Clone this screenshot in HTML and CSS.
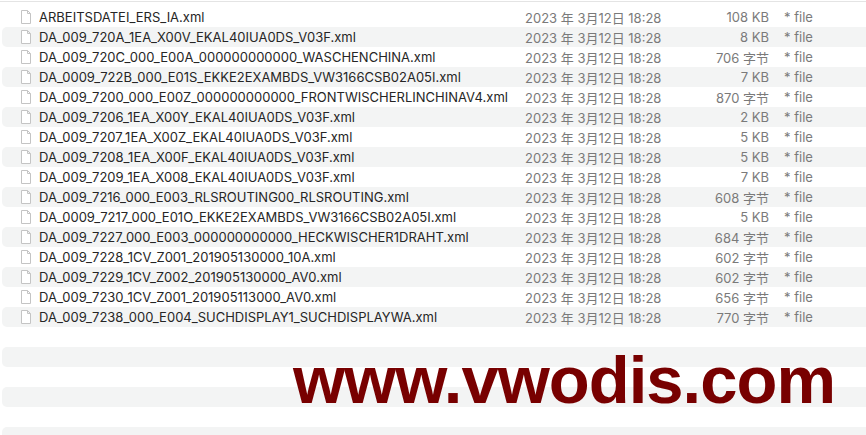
FILE: index.html
```html
<!DOCTYPE html>
<html lang="zh-CN">
<head>
  <meta charset="UTF-8" />
  <meta name="viewport" content="width=device-width, initial-scale=1.0"/>
  <title>Finder - XML</title>
  <link rel="stylesheet" href="styles.css">
</head>
<body>
  <div class="janela">
    <div class="lista">
      <div class="linha">
        <span class="icone"><svg width="10" height="14" viewBox="0 0 10 14"><path d="M0.5 0.5 H6.5 L9.5 3.5 V13.5 H0.5 Z M6.5 0.5 V3.5 H9.5" fill="#fff" stroke="#c4c4c4" stroke-width="1"/></svg></span>
        <span class="nome">ARBEITSDATEI_ERS_IA.xml</span>
        <span class="data">2023 年 3月12日 18:28</span>
        <span class="tam">108 KB</span>
        <span class="tipo">* file</span>
      </div>
      <div class="linha">
        <span class="icone"><svg width="10" height="14" viewBox="0 0 10 14"><path d="M0.5 0.5 H6.5 L9.5 3.5 V13.5 H0.5 Z M6.5 0.5 V3.5 H9.5" fill="#fff" stroke="#c4c4c4" stroke-width="1"/></svg></span>
        <span class="nome">DA_009_720A_1EA_X00V_EKAL40IUA0DS_V03F.xml</span>
        <span class="data">2023 年 3月12日 18:28</span>
        <span class="tam">8 KB</span>
        <span class="tipo">* file</span>
      </div>
      <div class="linha">
        <span class="icone"><svg width="10" height="14" viewBox="0 0 10 14"><path d="M0.5 0.5 H6.5 L9.5 3.5 V13.5 H0.5 Z M6.5 0.5 V3.5 H9.5" fill="#fff" stroke="#c4c4c4" stroke-width="1"/></svg></span>
        <span class="nome">DA_009_720C_000_E00A_000000000000_WASCHENCHINA.xml</span>
        <span class="data">2023 年 3月12日 18:28</span>
        <span class="tam">706 字节</span>
        <span class="tipo">* file</span>
      </div>
      <div class="linha">
        <span class="icone"><svg width="10" height="14" viewBox="0 0 10 14"><path d="M0.5 0.5 H6.5 L9.5 3.5 V13.5 H0.5 Z M6.5 0.5 V3.5 H9.5" fill="#fff" stroke="#c4c4c4" stroke-width="1"/></svg></span>
        <span class="nome">DA_0009_722B_000_E01S_EKKE2EXAMBDS_VW3166CSB02A05I.xml</span>
        <span class="data">2023 年 3月12日 18:28</span>
        <span class="tam">7 KB</span>
        <span class="tipo">* file</span>
      </div>
      <div class="linha">
        <span class="icone"><svg width="10" height="14" viewBox="0 0 10 14"><path d="M0.5 0.5 H6.5 L9.5 3.5 V13.5 H0.5 Z M6.5 0.5 V3.5 H9.5" fill="#fff" stroke="#c4c4c4" stroke-width="1"/></svg></span>
        <span class="nome">DA_009_7200_000_E00Z_000000000000_FRONTWISCHERLINCHINAV4.xml</span>
        <span class="data">2023 年 3月12日 18:28</span>
        <span class="tam">870 字节</span>
        <span class="tipo">* file</span>
      </div>
      <div class="linha">
        <span class="icone"><svg width="10" height="14" viewBox="0 0 10 14"><path d="M0.5 0.5 H6.5 L9.5 3.5 V13.5 H0.5 Z M6.5 0.5 V3.5 H9.5" fill="#fff" stroke="#c4c4c4" stroke-width="1"/></svg></span>
        <span class="nome">DA_009_7206_1EA_X00Y_EKAL40IUA0DS_V03F.xml</span>
        <span class="data">2023 年 3月12日 18:28</span>
        <span class="tam">2 KB</span>
        <span class="tipo">* file</span>
      </div>
      <div class="linha">
        <span class="icone"><svg width="10" height="14" viewBox="0 0 10 14"><path d="M0.5 0.5 H6.5 L9.5 3.5 V13.5 H0.5 Z M6.5 0.5 V3.5 H9.5" fill="#fff" stroke="#c4c4c4" stroke-width="1"/></svg></span>
        <span class="nome">DA_009_7207_1EA_X00Z_EKAL40IUA0DS_V03F.xml</span>
        <span class="data">2023 年 3月12日 18:28</span>
        <span class="tam">5 KB</span>
        <span class="tipo">* file</span>
      </div>
      <div class="linha">
        <span class="icone"><svg width="10" height="14" viewBox="0 0 10 14"><path d="M0.5 0.5 H6.5 L9.5 3.5 V13.5 H0.5 Z M6.5 0.5 V3.5 H9.5" fill="#fff" stroke="#c4c4c4" stroke-width="1"/></svg></span>
        <span class="nome">DA_009_7208_1EA_X00F_EKAL40IUA0DS_V03F.xml</span>
        <span class="data">2023 年 3月12日 18:28</span>
        <span class="tam">5 KB</span>
        <span class="tipo">* file</span>
      </div>
      <div class="linha">
        <span class="icone"><svg width="10" height="14" viewBox="0 0 10 14"><path d="M0.5 0.5 H6.5 L9.5 3.5 V13.5 H0.5 Z M6.5 0.5 V3.5 H9.5" fill="#fff" stroke="#c4c4c4" stroke-width="1"/></svg></span>
        <span class="nome">DA_009_7209_1EA_X008_EKAL40IUA0DS_V03F.xml</span>
        <span class="data">2023 年 3月12日 18:28</span>
        <span class="tam">7 KB</span>
        <span class="tipo">* file</span>
      </div>
      <div class="linha">
        <span class="icone"><svg width="10" height="14" viewBox="0 0 10 14"><path d="M0.5 0.5 H6.5 L9.5 3.5 V13.5 H0.5 Z M6.5 0.5 V3.5 H9.5" fill="#fff" stroke="#c4c4c4" stroke-width="1"/></svg></span>
        <span class="nome">DA_009_7216_000_E003_RLSROUTING00_RLSROUTING.xml</span>
        <span class="data">2023 年 3月12日 18:28</span>
        <span class="tam">608 字节</span>
        <span class="tipo">* file</span>
      </div>
      <div class="linha">
        <span class="icone"><svg width="10" height="14" viewBox="0 0 10 14"><path d="M0.5 0.5 H6.5 L9.5 3.5 V13.5 H0.5 Z M6.5 0.5 V3.5 H9.5" fill="#fff" stroke="#c4c4c4" stroke-width="1"/></svg></span>
        <span class="nome">DA_0009_7217_000_E01O_EKKE2EXAMBDS_VW3166CSB02A05I.xml</span>
        <span class="data">2023 年 3月12日 18:28</span>
        <span class="tam">5 KB</span>
        <span class="tipo">* file</span>
      </div>
      <div class="linha">
        <span class="icone"><svg width="10" height="14" viewBox="0 0 10 14"><path d="M0.5 0.5 H6.5 L9.5 3.5 V13.5 H0.5 Z M6.5 0.5 V3.5 H9.5" fill="#fff" stroke="#c4c4c4" stroke-width="1"/></svg></span>
        <span class="nome">DA_009_7227_000_E003_000000000000_HECKWISCHER1DRAHT.xml</span>
        <span class="data">2023 年 3月12日 18:28</span>
        <span class="tam">684 字节</span>
        <span class="tipo">* file</span>
      </div>
      <div class="linha">
        <span class="icone"><svg width="10" height="14" viewBox="0 0 10 14"><path d="M0.5 0.5 H6.5 L9.5 3.5 V13.5 H0.5 Z M6.5 0.5 V3.5 H9.5" fill="#fff" stroke="#c4c4c4" stroke-width="1"/></svg></span>
        <span class="nome">DA_009_7228_1CV_Z001_201905130000_10A.xml</span>
        <span class="data">2023 年 3月12日 18:28</span>
        <span class="tam">602 字节</span>
        <span class="tipo">* file</span>
      </div>
      <div class="linha">
        <span class="icone"><svg width="10" height="14" viewBox="0 0 10 14"><path d="M0.5 0.5 H6.5 L9.5 3.5 V13.5 H0.5 Z M6.5 0.5 V3.5 H9.5" fill="#fff" stroke="#c4c4c4" stroke-width="1"/></svg></span>
        <span class="nome">DA_009_7229_1CV_Z002_201905130000_AV0.xml</span>
        <span class="data">2023 年 3月12日 18:28</span>
        <span class="tam">602 字节</span>
        <span class="tipo">* file</span>
      </div>
      <div class="linha">
        <span class="icone"><svg width="10" height="14" viewBox="0 0 10 14"><path d="M0.5 0.5 H6.5 L9.5 3.5 V13.5 H0.5 Z M6.5 0.5 V3.5 H9.5" fill="#fff" stroke="#c4c4c4" stroke-width="1"/></svg></span>
        <span class="nome">DA_009_7230_1CV_Z001_201905113000_AV0.xml</span>
        <span class="data">2023 年 3月12日 18:28</span>
        <span class="tam">656 字节</span>
        <span class="tipo">* file</span>
      </div>
      <div class="linha">
        <span class="icone"><svg width="10" height="14" viewBox="0 0 10 14"><path d="M0.5 0.5 H6.5 L9.5 3.5 V13.5 H0.5 Z M6.5 0.5 V3.5 H9.5" fill="#fff" stroke="#c4c4c4" stroke-width="1"/></svg></span>
        <span class="nome">DA_009_7238_000_E004_SUCHDISPLAY1_SUCHDISPLAYWA.xml</span>
        <span class="data">2023 年 3月12日 18:28</span>
        <span class="tam">770 字节</span>
        <span class="tipo">* file</span>
      </div>
      <div class="linha vazia"></div>
      <div class="linha vazia"></div>
      <div class="linha vazia"></div>
      <div class="linha vazia"></div>
      <div class="linha vazia"></div>
      <div class="linha vazia"></div>
    </div>
    <div class="marca">www.vwodis.com</div>
  </div>
</body>
</html>
```

FILE: styles.css
```css
body {
  margin: 0;
  padding: 0;
  font-family: Inter, "Noto Sans CJK SC", sans-serif;
  background: #fff;
  overflow: hidden;
}

.janela {
  position: relative;
  width: 866px;
  height: 435px;
  border-top: 1px solid #e4e4e4;
  margin-top: 1px;
  box-sizing: border-box;
}

.lista {
  padding-top: 5px;
}

.linha {
  display: grid;
  grid-template-columns: 18px 486px 150px 94px 1fr;
  align-items: center;
  height: 20px;
  margin-left: 2px;
  padding-left: 19px;
  border-radius: 5px 0 0 5px;
  font-size: 13px;
  color: #262626;
  white-space: nowrap;
}

.linha:nth-child(even) {
  background: #f3f4f4;
}

.icone {
  display: flex;
  align-items: center;
}

.nome {
  overflow: hidden;
}

.data,
.tam,
.tipo {
  color: #7a7a7a;
}

.tam {
  text-align: right;
}

.tipo {
  padding-left: 15px;
}

.marca {
  position: absolute;
  left: 293px;
  top: 344px;
  font-family: "Liberation Sans", sans-serif;
  font-weight: bold;
  font-size: 67px;
  line-height: 1;
  color: #780000;
  letter-spacing: -1px;
  white-space: nowrap;
}
```
